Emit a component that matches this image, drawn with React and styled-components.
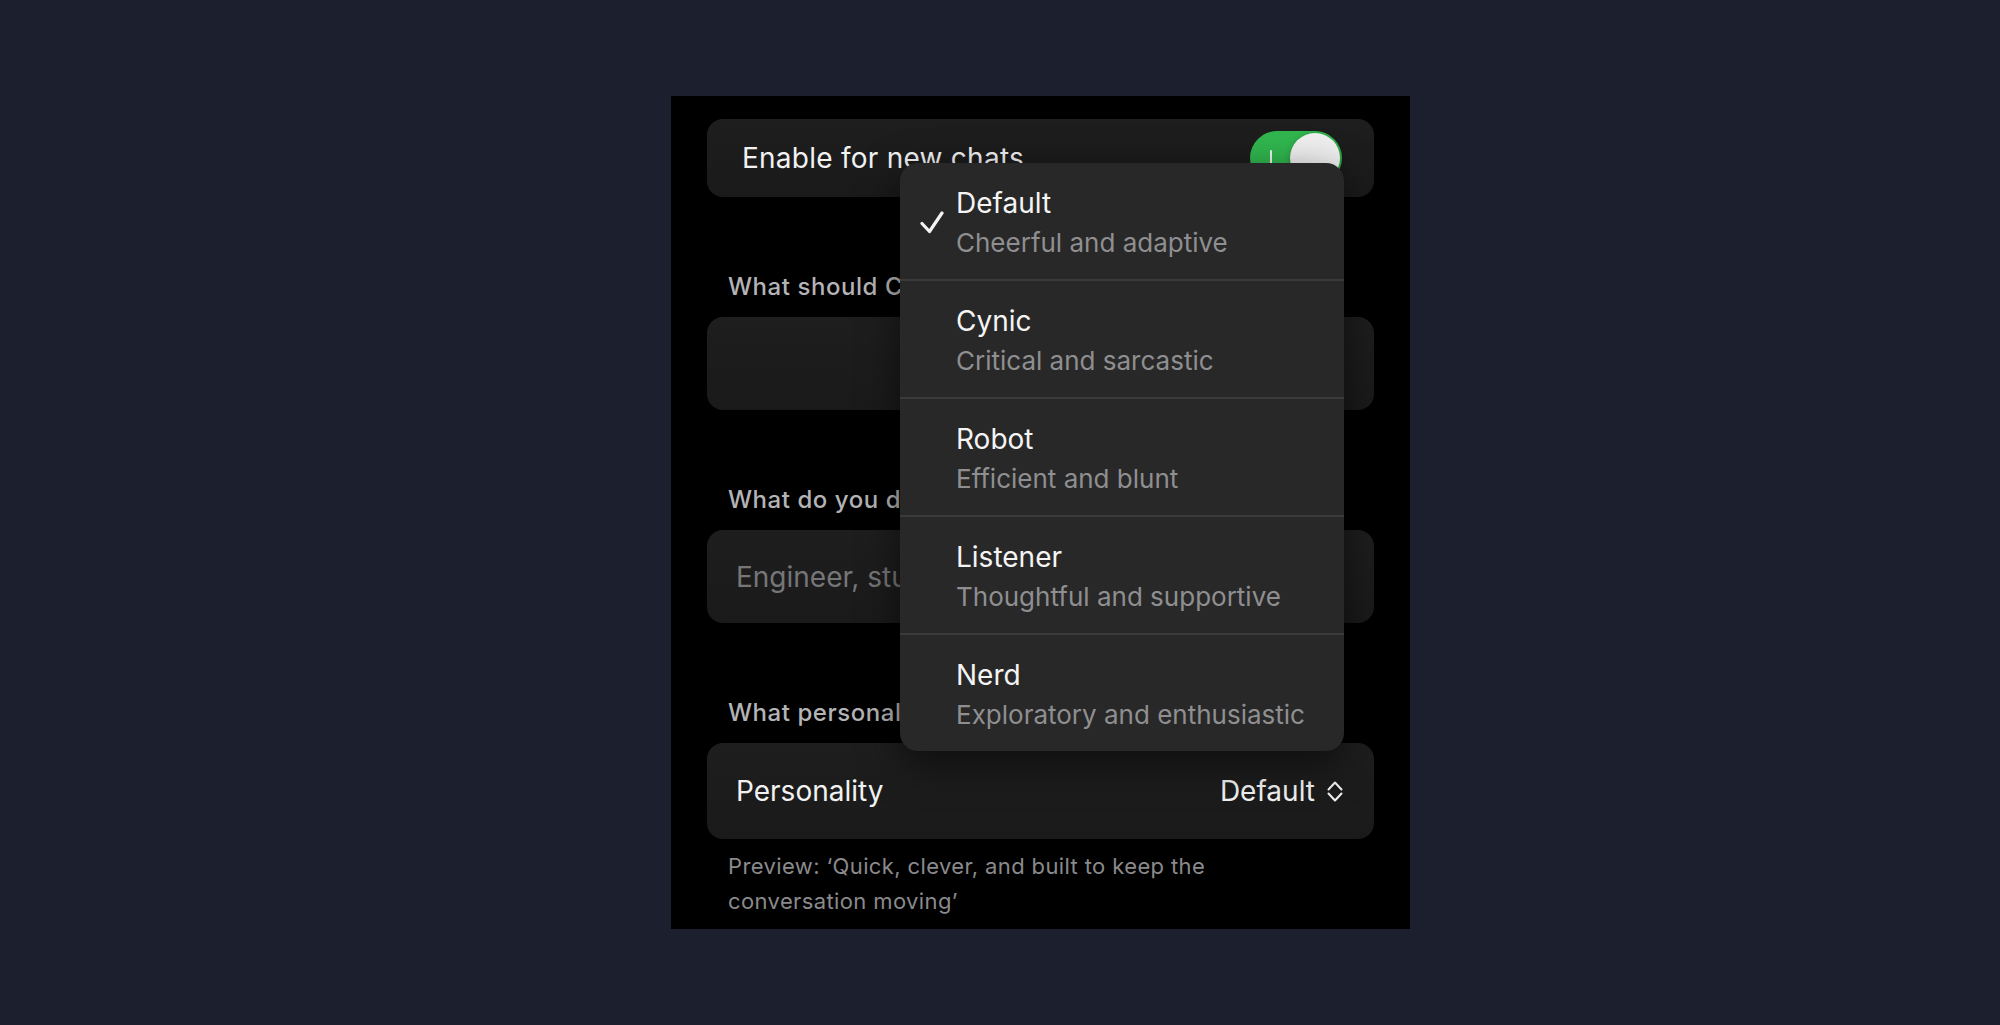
import React from "react";
import styled, { createGlobalStyle } from "styled-components";

const GlobalStyle = createGlobalStyle`
  html, body {
    margin: 0;
    padding: 0;
    background: #1c1f2e;
  }
  * {
    box-sizing: border-box;
  }
`;

const Page = styled.div`
  min-height: 100vh;
  display: flex;
  align-items: center;
  padding-left: 671px;
  background: #1c1f2e;
  font-family: Inter, "Noto Sans", "Liberation Sans", sans-serif;
`;

const Panel = styled.div`
  position: relative;
  width: 739px;
  height: 833px;
  background: #000;
  padding: 23px 36px 0;
  display: flex;
  flex-direction: column;
`;

const Card = styled.div`
  height: ${p => p.h || 94}px;
  border-radius: 16px;
  background: linear-gradient(180deg, #1e1e1f 0%, #1a1a1b 100%);
  display: flex;
  align-items: center;
  justify-content: space-between;
  padding: ${p => p.pad || "0 31px 0 29px"};
`;

const RowText = styled.span`
  font-size: 28px;
  color: #f2f2f2;
  letter-spacing: ${p => p.track || "0"};
`;

const Placeholder = styled.span`
  font-size: 28px;
  color: #767678;
`;

const Label = styled.div`
  margin: 76px 0 16px;
  padding-left: 21px;
  font-size: 24px;
  line-height: 28px;
  font-weight: 500;
  letter-spacing: 0.55px;
  color: #b4b4b6;
`;

const Preview = styled.div`
  margin-top: 10px;
  padding-left: 21px;
  font-size: 22px;
  line-height: 35px;
  letter-spacing: 0.38px;
  color: #8a8a8c;
`;

const Toggle = styled.div`
  position: relative;
  width: 92px;
  height: 54px;
  border-radius: 27px;
  background: #31b64e;
  display: flex;
  align-items: center;
  justify-content: space-between;
  padding: 0 2px 0 20px;
`;

const ToggleMark = styled.span`
  width: 2px;
  height: 17px;
  background: #f2f2f2;
  border-radius: 1px;
`;

const Knob = styled.span`
  width: 50px;
  height: 50px;
  border-radius: 50%;
  background: #efefef;
  box-shadow: 0 2px 6px rgba(0, 0, 0, 0.25);
`;

const Picker = styled.div`
  display: flex;
  align-items: center;
  gap: 12px;
`;

const Menu = styled.div`
  position: absolute;
  left: 229px;
  top: 67px;
  width: 444px;
  border-radius: 18px;
  background: #282828;
  box-shadow: 0 12px 40px rgba(0, 0, 0, 0.55);
  overflow: hidden;
`;

const Item = styled.div`
  height: ${p => (p.first ? 116 : 118)}px;
  border-top: ${p => (p.first ? "none" : "2px solid #3b3b3c")};
  display: flex;
  align-items: flex-start;
  padding: 22px 20px 0 20px;
`;

const CheckSlot = styled.div`
  width: 36px;
  flex: none;
  height: 75px;
  display: flex;
  align-items: center;
`;

const ItemText = styled.div`
  display: flex;
  flex-direction: column;
`;

const ItemTitle = styled.div`
  font-size: 28px;
  line-height: 36px;
  color: #f4f4f4;
`;

const ItemSub = styled.div`
  margin-top: 4px;
  font-size: 26px;
  line-height: 35px;
  color: #8f8f91;
`;

const options = [
  { title: "Default", sub: "Cheerful and adaptive", checked: true },
  { title: "Cynic", sub: "Critical and sarcastic" },
  { title: "Robot", sub: "Efficient and blunt" },
  { title: "Listener", sub: "Thoughtful and supportive" },
  { title: "Nerd", sub: "Exploratory and enthusiastic" },
];

const Check = () => (
  <svg width="24" height="23" viewBox="0 0 24 23" fill="none">
    <path
      d="M2 12.5 L9.5 20.5 L22 2"
      stroke="#f4f4f4"
      strokeWidth="3.2"
      strokeLinecap="round"
      strokeLinejoin="round"
    />
  </svg>
);

const UpDown = () => (
  <svg width="16" height="21" viewBox="0 0 16 21" fill="none">
    <path
      d="M1.5 8.5 L8 1.5 L14.5 8.5 M1.5 12.5 L8 19.5 L14.5 12.5"
      stroke="#f2f2f2"
      strokeWidth="2"
      strokeLinecap="round"
      strokeLinejoin="round"
    />
  </svg>
);

const App = () => {
  return (
    <Page>
      <GlobalStyle />
      <Panel>
        <Card h={78} pad="0 32px 0 35px">
          <RowText track="0.25px">Enable for new chats</RowText>
          <Toggle>
            <ToggleMark />
            <Knob />
          </Toggle>
        </Card>

        <Label>What should ChatGPT call you?</Label>
        <Card h={93} />

        <Label>What do you do?</Label>
        <Card h={93}>
          <Placeholder>Engineer, student, etc.</Placeholder>
        </Card>

        <Label>What personality should ChatGPT have?</Label>
        <Card h={96}>
          <RowText>Personality</RowText>
          <Picker>
            <RowText>Default</RowText>
            <UpDown />
          </Picker>
        </Card>

        <Preview>
          Preview: ‘Quick, clever, and built to keep the
          <br />
          conversation moving’
        </Preview>

        <Menu>
          {options.map((o, i) => (
            <Item key={o.title} first={i === 0}>
              <CheckSlot>{o.checked && <Check />}</CheckSlot>
              <ItemText>
                <ItemTitle>{o.title}</ItemTitle>
                <ItemSub>{o.sub}</ItemSub>
              </ItemText>
            </Item>
          ))}
        </Menu>
      </Panel>
    </Page>
  );
};

export default App;
